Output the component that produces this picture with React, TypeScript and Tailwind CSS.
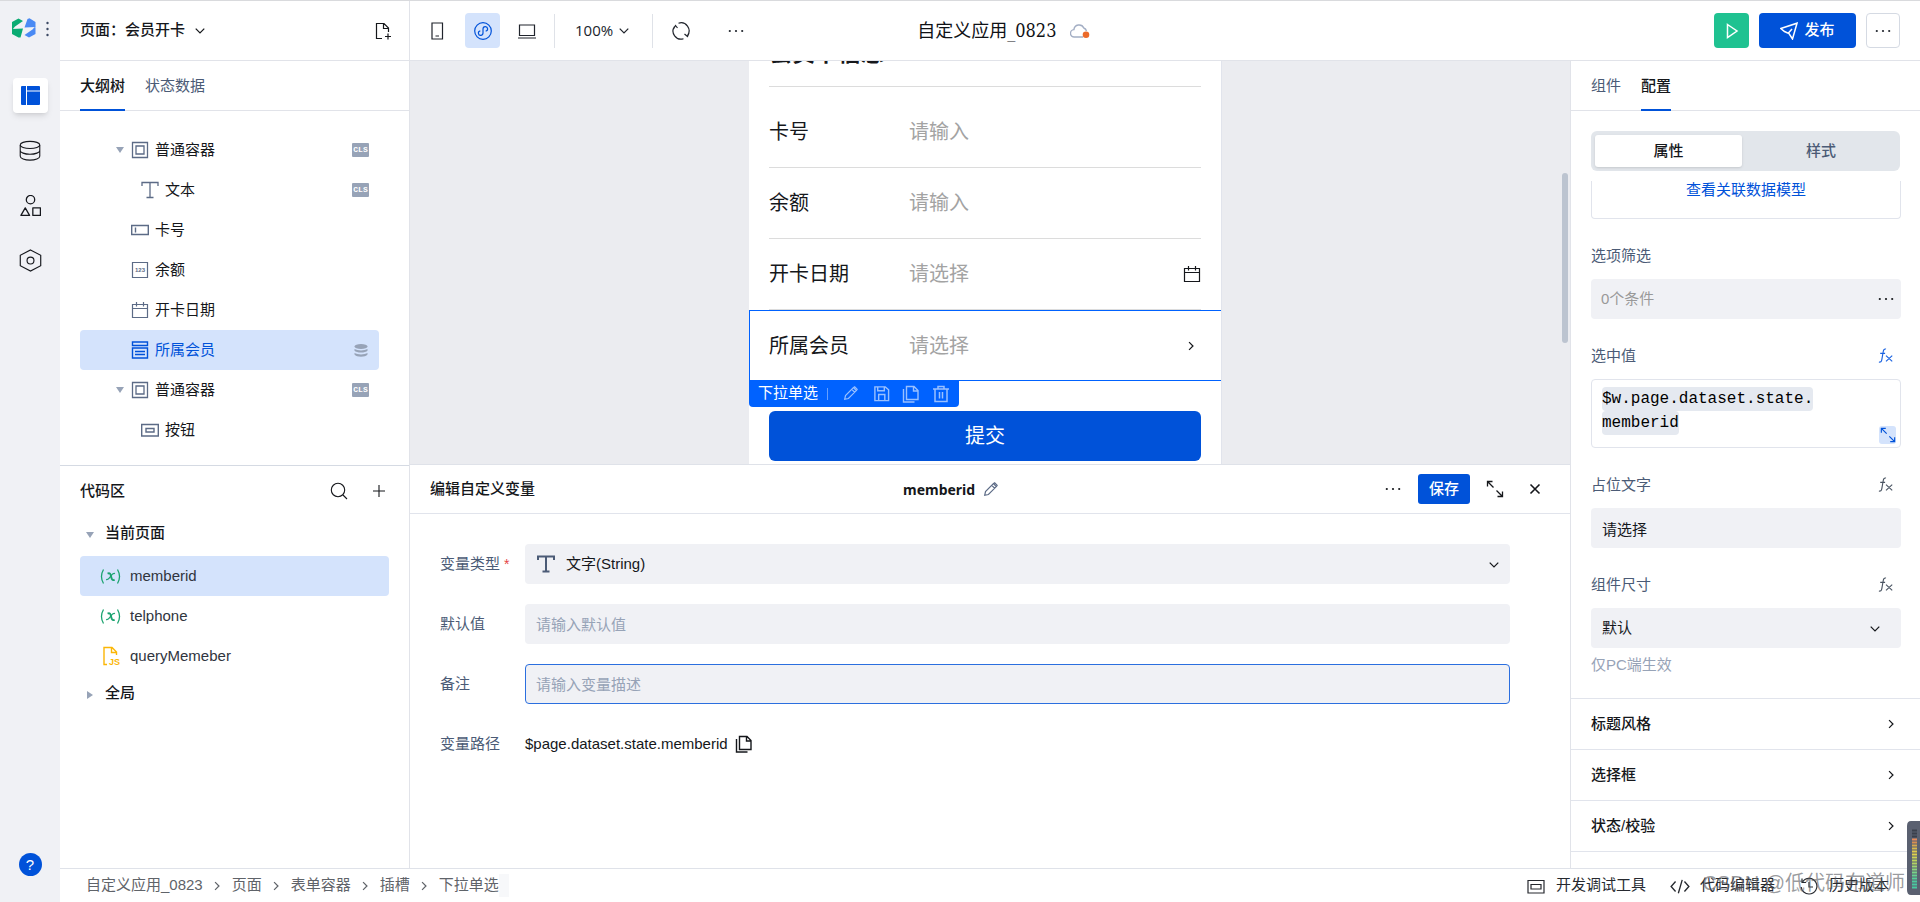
import React from 'react';

type IconProps = { children: React.ReactNode; size?: number; className?: string; w?: number };

function Icon({children, size = 18, className = '', w = 1.2}: IconProps) {
    return (
        <svg width={size} height={size} viewBox="0 0 18 18" fill="none" stroke="currentColor" strokeWidth={w}
             className={`shrink-0 ${className}`} aria-hidden="true">
            {children}
        </svg>
    );
}

const ChevronDown = ({className = ''}) => <Icon size={14} w={1.6} className={className}><path d="M3.500 6l5.500 5.500L14.500 6"/></Icon>;
const ChevronRight = ({className = ''}) => <Icon size={14} w={1.6} className={className}><path d="M6.500 4l5 5-5 5"/></Icon>;
const Dots = () => (
    <Icon><g fill="currentColor" stroke="none"><circle cx="2.800" cy="9" r="1.100"/><circle cx="9" cy="9" r="1.100"/><circle cx="15.200" cy="9" r="1.100"/></g></Icon>
);
const Expand = ({size = 18}) => (
    <Icon size={size} w={1.3}><path d="M7.500 7.500L1.500 1.500M1.500 6.500V1.500h5M10.500 10.500l6 6M16.500 11.500v5h-5"/></Icon>
);
const Pencil = ({className = ''}) => (
    <Icon size={15} className={className} w={1.4}><path d="M2 16l1-4.500L12.500 2l3.500 3.500L6.500 15zM10.500 4l3.500 3.500M12.500 2l1.500-1 3 3-1 1.500"/></Icon>
);
const Copy = ({className = ''}) => (
    <Icon className={className} w={1.4}><path d="M4.500 1.500h7.500l4 4v9H4.500zM11.500 1.500v4.500h4.500M1.500 4v13h11"/></Icon>
);
const Calendar = () => <Icon><path d="M1.500 3.500h15v13h-15zM1.500 7.500h15M5.500 1v4.500M12.500 1v4.500"/></Icon>;
const Triangle = ({open = true}) => (
    <svg width="8" height="8" viewBox="0 0 8 8" className="shrink-0 text-[#97a3b7]" fill="currentColor" aria-hidden="true">
        {open ? <path d="M0 1h8L4 7z"/> : <path d="M1 0l6 4-6 4z"/>}
    </svg>
);
const Fx = ({className = 'text-[#4b5563]'}) => (
    <Icon size={16} className={className} w={1.3}>
        <path d="M9 1.200C6.800.6 6.200 2.200 5.800 4.500L4.300 13c-.4 2.500-1.500 3.200-3.300 2.800M2.500 6h5.500M9 8.500l7 6.500M16 8.500L9 15"/>
    </Icon>
);
const Database = () => (
    <Icon size={22} w={0.9}><ellipse cx="9" cy="4" rx="8" ry="2.900"/><path d="M1 4v9.300c0 1.700 3.600 3.200 8 3.200s8-1.500 8-3.200V4M1 8.500c0 1.700 3.600 3.200 8 3.200s8-1.500 8-3.200"/></Icon>
);

const icons: Record<string, React.ReactNode> = {
    container: <Icon w={1.3}><path d="M1.500 1.500h15v15h-15zM5 5h8v8H5z"/></Icon>,
    text: <Icon w={1.3}><path d="M1 5V1.500h16V5M9 1.500v15M5.500 16.500h7"/></Icon>,
    input: <Icon w={1.4}><path d="M.700 4.500h16.600v9H.700zM4.500 6.500v5"/></Icon>,
    number: (
        <Icon w={1.2}>
            <path d="M1.500 1.500h15v15h-15z"/>
            <text x="9" y="11" textAnchor="middle" fontSize="6" fontWeight="bold" fill="currentColor" stroke="none">123</text>
        </Icon>
    ),
    date: <Calendar/>,
    select: <Icon w={1.4}><path d="M1.500 1h15v3.500h-15zM1.500 7h15v10h-15zM4 10.500h10M4 13.500h10"/></Icon>,
    button: <Icon w={1.4}><path d="M.700 3.500h16.600v11.500H.700zM5 7.500h8v3.500H5z"/></Icon>,
};

const tree = [
    {icon: 'container', label: '普通容器', open: true, tag: 'cls', deep: false},
    {icon: 'text', label: '文本', tag: 'cls', deep: true},
    {icon: 'input', label: '卡号', deep: false},
    {icon: 'number', label: '余额', deep: false},
    {icon: 'date', label: '开卡日期', deep: false},
    {icon: 'select', label: '所属会员', tag: 'data', active: true, deep: false},
    {icon: 'container', label: '普通容器', open: true, tag: 'cls', deep: false},
    {icon: 'button', label: '按钮', deep: true},
];

const fields = [
    {id: 'card', label: '卡号', placeholder: '请输入'},
    {id: 'balance', label: '余额', placeholder: '请输入'},
    {id: 'date', label: '开卡日期', placeholder: '请选择', icon: <Calendar/>},
];

const crumbs = ['自定义应用_0823', '页面', '表单容器', '插槽', '下拉单选'];

function Sidebar() {
    return (
        <nav className="w-[60px] shrink-0 flex flex-col items-center bg-[#f0f1f5] pb-[26px]">
            <div className="h-[77px] w-full flex items-start pt-[17px] pl-3 gap-2.5">
                <svg width="24" height="20" viewBox="0 0 24 20" aria-hidden="true">
                    <path d="M0 4L6.500.500l4.500 2.500L3 8.500 0 12zM0 11l11-.500-2.500 9-2 0L0 16z" fill="#0aab72"/>
                    <path d="M23.500 16L17 19.500 12.500 17l8-5.500 3-3.500zM23.500 9l-11 .500L15.500 1 17.500.200 23.500 4z" fill="#4a8af4"/>
                </svg>
                <svg width="4" height="18" viewBox="0 0 4 18" fill="#3c4964" className="mt-0.5" aria-hidden="true">
                    <circle cx="1.500" cy="3" r="1.200"/><circle cx="1.500" cy="9" r="1.200"/><circle cx="1.500" cy="15" r="1.200"/>
                </svg>
            </div>
            <div className="flex-1 flex flex-col gap-5 text-[#16181d]">
                <button aria-label="布局" className="size-[35px] flex items-center justify-center rounded bg-white shadow-md text-[#0052d9]">
                    <svg width="19" height="19" viewBox="0 0 19 19" fill="currentColor" aria-hidden="true">
                        <path d="M1 0h4v19H1a1 1 0 01-1-1V1a1 1 0 011-1zM6 0h12a1 1 0 011 1v3.500H6zM6 5.500h13V18a1 1 0 01-1 1H6z"/>
                    </svg>
                </button>
                <button aria-label="数据" className="size-[35px] flex items-center justify-center"><Database/></button>
                <button aria-label="组件库" className="size-[35px] flex items-center justify-center">
                    <Icon size={21} w={1.1}><circle cx="9" cy="4" r="3.600"/><path strokeLinejoin="round" d="M4.500 11l3.700 6.500H.800zM11 11h6.500v6.500H11z"/></Icon>
                </button>
                <button aria-label="设置" className="size-[35px] flex items-center justify-center">
                    <Icon size={23} w={0.9}><path d="M9 .700l8 4.200v8.200l-8 4.200-8-4.200V4.900z"/><circle cx="9" cy="9" r="2.700"/></Icon>
                </button>
            </div>
            <button className="size-[23px] rounded-full bg-[#0052d9] text-white text-[15px] leading-none">?</button>
        </nav>
    );
}

function Header() {
    return (
        <header className="h-[60px] shrink-0 flex bg-white border-b border-[#e1e3e9]">
            <div className="w-[350px] shrink-0 pl-5 pr-[17px] flex items-center justify-between border-r border-[#e1e3e9]">
                <button className="flex items-center gap-2 font-medium">页面：会员开卡<ChevronDown/></button>
                <button aria-label="新建页面">
                    <Icon w={1.2}><path d="M8 16.500H2.500V1.500H10l4.500 4.500v4M9.500 1.500v5h5M14 11.500v6M11 14.500h6"/></Icon>
                </button>
            </div>
            <div className="flex-1 min-w-0 flex items-center pl-[18px] pr-5 text-[#20242c]">
                <button aria-label="手机" className="size-[18px]"><Icon w={1.2}><path d="M4 1h10.500v16H4zM7.500 14h3.500"/></Icon></button>
                <button aria-label="小程序" className="size-[35px] ml-[19px] rounded flex items-center justify-center bg-[#d4e3fc] text-[#0052d9]">
                    <Icon w={1.2}>
                        <circle cx="9" cy="9" r="8.300"/>
                        <path d="M6.300 8.800a2.300 2.300 0 102.700 2.300V6.900a2.300 2.300 0 112.700 2.300"/>
                    </Icon>
                </button>
                <button aria-label="电脑" className="ml-[18px]"><Icon w={1.2}><path d="M1.500 3h15v10.500h-15zM0 16h18"/></Icon></button>
                <div className="w-px h-[34px] ml-[18px] bg-[#dfe2e8]"/>
                <button className="ml-[20px] flex items-center gap-1 font-['Open_Sans']">100%<ChevronDown/></button>
                <div className="w-px h-[34px] ml-[21px] bg-[#dfe2e8]"/>
                <button aria-label="刷新" className="ml-[19px]">
                    <Icon w={1.2}>
                        <path d="M6.500 1.200A8 8 0 0115.500 13.500M2.500 4.500A8 8 0 0011.500 16.700M1.500 7l2-3.500L5.500 6M12.500 12l3 2.500 1.500-3.500"/>
                    </Icon>
                </button>
                <button aria-label="更多" className="ml-[37px]"><Dots/></button>
                <h1 className="ml-[172px] text-[18px] text-[#101216] font-['DejaVu_Serif_Condensed','Noto_Sans_CJK_SC',sans-serif]">自定义应用_0823</h1>
                <svg width="20" height="16" viewBox="0 0 20 16" className="ml-[14px]" fill="none" aria-hidden="true">
                    <path d="M13 14H4.500a3.700 3.700 0 01-.6-7.400A5.200 5.200 0 0113.800 5a4.500 4.500 0 012.700 3" stroke="#a3aec4" strokeWidth="1.400"/>
                    <circle cx="16" cy="11.800" r="3.300" fill="#eb6a2a"/>
                </svg>
                <div className="ml-auto flex gap-2.5">
                    <button aria-label="运行" className="size-[35px] rounded flex items-center justify-center bg-[#1fc291] text-white">
                        <Icon w={1.5}><path d="M4.500 2.500l9.500 6.500-9.500 6.500z"/></Icon>
                    </button>
                    <button className="w-[97px] h-[35px] rounded flex items-center justify-center gap-1.5 bg-[#0052d9] text-white font-medium">
                        <Icon w={1.5}><path d="M.8 6.500L17 1.200 12.500 17 9 11.500 4.500 9.500zM8 11.500l4-4.500"/></Icon>发布
                    </button>
                    <button aria-label="更多操作" className="w-[34px] h-[35px] rounded border border-[#d5dae3] flex items-center justify-center"><Dots/></button>
                </div>
            </div>
        </header>
    );
}

function Outline() {
    return (
        <section className="flex-1 min-h-0 flex flex-col">
            <div className="h-[50px] shrink-0 flex gap-5 px-5 border-b border-[#e1e3e9]">
                <button className="-mb-px pt-[3px] border-b-2 border-[#0052d9] font-medium">大纲树</button>
                <button className="-mb-px pt-[3px] border-b-2 border-transparent text-[#4b5b76]">状态数据</button>
            </div>
            <ul className="pt-[19px] pl-5 pr-[30px]">
                {tree.map((node, i) => (
                    <li key={i} className={`h-10 flex items-center rounded pr-2.5 ${node.deep ? 'pl-[61px]' : 'pl-[36px]'} ${node.active ? 'bg-[#d4e3fc] text-[#0052d9]' : ''}`}>
                        {!node.deep && <span className="w-[15px] flex">{node.open && <Triangle/>}</span>}
                        <span className={node.active ? '' : 'text-[#5c6b86]'}>{icons[node.icon]}</span>
                        <span className="flex-1 pl-1.5">{node.label}</span>
                        {node.tag === 'cls' && (
                            <span className="w-[17px] h-[14px] rounded-[1px] bg-[#97a3b7] text-white text-[8px] leading-[14px] text-center font-bold font-['Liberation_Mono']">CLS</span>
                        )}
                        {node.tag === 'data' && (
                            <svg width="14" height="13" viewBox="0 0 14 13" className="mr-px" fill="#97a3b7" aria-hidden="true">
                                <ellipse cx="7" cy="2.500" rx="6.500" ry="2.500"/>
                                <path d="M.5 5c3 1.900 10 1.900 13 0v1.700c-2 2.400-11 2.400-13 0zM.5 9c3 1.900 10 1.900 13 0v1.500c-2 3-11 3-13 0z"/>
                            </svg>
                        )}
                    </li>
                ))}
            </ul>
        </section>
    );
}

function CodeArea() {
    const Var = () => (
        <Icon size={21} className="text-[#1aa36f]" w={1.1}>
            <path d="M3 3q-3.500 6 0 12M15 3q3.500 6 0 12"/>
            <path strokeWidth="1.600" d="M6.500 6.500c2-1 2.500.5 3 2.500s1 4 3 2.700"/>
            <path d="M12.800 6.500c-2-.8-3 1.500-4 2.800s-2 3-3.500 2.200"/>
        </Icon>
    );
    return (
        <section className="h-[403px] shrink-0 px-5 border-t border-[#d5dae3]">
            <div className="h-[50px] flex items-center">
                <h2 className="flex-1 font-medium">代码区</h2>
                <button aria-label="搜索" className="mr-[22px]"><Icon w={1.1}><circle cx="8" cy="8" r="6.700"/><path d="M13 13l4 4"/></Icon></button>
                <button aria-label="新增" className="mr-[1px]"><Icon w={1.1}><path d="M9 3v12M3 9h12"/></Icon></button>
            </div>
            <div className="h-[34px] mb-1.5 pl-1.5 flex items-center gap-[11px] font-medium"><span className="pt-1"><Triangle/></span>当前页面</div>
            <ul className="text-[#30353e]">
                <li className="h-10 pl-5 flex items-center gap-[9px] rounded bg-[#d4e3fc]"><Var/>memberid</li>
                <li className="h-10 pl-5 flex items-center gap-[9px]"><Var/>telphone</li>
                <li className="h-10 pl-5 flex items-center gap-[9px]">
                    <svg width="21" height="20" viewBox="0 0 21 20" fill="none" stroke="#fbb606" strokeWidth="1.400" aria-hidden="true">
                        <path d="M7 18.500H4V1.500h8l4.500 4.500v3M11.500 1.500v5h5"/>
                        <text x="9" y="18.500" fontSize="9" fontWeight="bold" fill="#fbb606" stroke="none">JS</text>
                    </svg>
                    queryMemeber
                </li>
            </ul>
            <div className="h-[34px] pl-1.5 flex items-center gap-[11px] font-medium"><span className="pt-1"><Triangle open={false}/></span>全局</div>
        </section>
    );
}

function Canvas() {
    return (
        <section className="relative flex-1 min-h-0 flex justify-center overflow-hidden bg-[#ebecf0] pr-[9px]">
            <div className="w-[473px] h-full flex flex-col justify-end bg-white border-r border-[#e1e4ec] text-[20px] text-[#15171b]">
                <h2 className="mx-5 shrink-0 pb-4 leading-[34px] text-[23px] font-bold border-b border-[#dcdcdc]">会员卡信息</h2>
                <div className="h-2.5 shrink-0"/>
                {fields.map(f => (
                    <div key={f.id} className="mx-5 h-[71px] shrink-0 flex items-center border-b border-[#dcdcdc]">
                        <label htmlFor={f.id} className="w-[140px]">{f.label}</label>
                        <input id={f.id} placeholder={f.placeholder} className="flex-1 min-w-0 outline-none placeholder:text-[#a3a3a3]"/>
                        {f.icon}
                    </div>
                ))}
                <div className="relative h-[71px] shrink-0 flex items-center pl-[19px] pr-[21px] border border-r-0 border-[#0062ff]">
                    <label htmlFor="member" className="w-[140px]">所属会员</label>
                    <input id="member" placeholder="请选择" className="flex-1 min-w-0 outline-none placeholder:text-[#a3a3a3]"/>
                    <ChevronRight className="mr-0.5"/>
                    <div className="absolute -left-px top-[69px] w-[210px] h-[27px] pl-[9px] flex items-center rounded-b bg-[#0062ff] text-white text-[15px]">
                        下拉单选
                        <span className="w-px h-3 ml-[9px] mr-[15px] bg-white/40"/>
                        <div className="flex items-center gap-3 text-white/60">
                            <button aria-label="编辑" className="w-[18px]"><Pencil/></button>
                            <button aria-label="存为模板"><Icon size={17} w={1.5}><path d="M2 2h11l3.500 3v11.500H2zM5 2v4h7V2M6 16.500V10h6.500v6.500"/></Icon></button>
                            <button aria-label="复制"><Copy/></button>
                            <button aria-label="删除"><Icon w={1.5}><path d="M1 4h16M6 4V1.500h6V4M3 4v12.500h12V4M7.500 7v6.500M10.500 7v6.500"/></Icon></button>
                        </div>
                    </div>
                </div>
                <button className="mx-5 mt-[30px] mb-[3px] h-[50px] shrink-0 rounded-md bg-[#0052d9] text-white">提交</button>
            </div>
            <div className="absolute right-[2px] top-[112px] w-1.5 h-[170px] rounded-full bg-[#bcc4d0]"/>
        </section>
    );
}

function VariableEditor() {
    return (
        <section className="h-[404px] shrink-0 bg-white border-t border-[#dfe2e9]">
            <div className="h-[49px] flex items-center pl-5 pr-[26px] border-b border-[#e1e4ec]">
                <h2 className="w-[473px] font-medium">编辑自定义变量</h2>
                <div className="flex-1 flex items-center gap-2 font-['Noto_Sans'] text-[14px] font-bold">
                    memberid<button aria-label="重命名"><Pencil className="text-[#5c6b86]"/></button>
                </div>
                <button aria-label="更多"><Dots/></button>
                <button className="w-[52px] h-[30px] ml-4 rounded-[3px] bg-[#0052d9] text-white font-medium">保存</button>
                <button aria-label="全屏" className="ml-4"><Expand/></button>
                <button aria-label="关闭" className="ml-[22px]"><Icon w={1.6}><path d="M4.500 4.500l9 9M13.500 4.500l-9 9"/></Icon></button>
            </div>
            <form className="pt-[30px] pl-[30px] pr-[60px] flex flex-col gap-5">
                <div className="h-10 flex items-center">
                    <label htmlFor="type" className="w-[85px] shrink-0 text-[#4b5b76]">变量类型<span className="ml-1 text-[#e54545] text-sm">*</span></label>
                    <div className="relative flex-1 h-full">
                        <select id="type" className="w-full h-full pl-[41px] rounded bg-[#f0f1f5] appearance-none">
                            <option>文字(String)</option>
                        </select>
                        <span className="absolute left-3 top-[11px] text-[#4b5b76]"><Icon w={2}><path d="M1 5V1.500h16V5M9 1.500v15M5.500 16.500h7"/></Icon></span>
                        <ChevronDown className="absolute right-[9px] top-[14px]"/>
                    </div>
                </div>
                <div className="h-10 flex items-center">
                    <label htmlFor="default" className="w-[85px] shrink-0 text-[#4b5b76]">默认值</label>
                    <input id="default" placeholder="请输入默认值" className="flex-1 h-full px-[11px] rounded bg-[#f0f1f5] placeholder:text-[#97a3b7]"/>
                </div>
                <div className="h-10 flex items-center">
                    <label htmlFor="remark" className="w-[85px] shrink-0 text-[#4b5b76]">备注</label>
                    <input id="remark" placeholder="请输入变量描述" className="flex-1 h-full px-2.5 rounded border border-[#2b6fdf] bg-[#f0f1f5] placeholder:text-[#97a3b7]"/>
                </div>
                <div className="h-10 flex items-center">
                    <span className="w-[85px] shrink-0 text-[#4b5b76]">变量路径</span>
                    <span>$page.dataset.state.memberid</span>
                    <button type="button" aria-label="复制路径" className="ml-[7px]"><Copy/></button>
                </div>
            </form>
        </section>
    );
}

function Inspector() {
    return (
        <aside className="w-[350px] shrink-0 flex flex-col overflow-hidden bg-white border-l border-[#e1e3e9]">
            <div className="h-[50px] shrink-0 flex gap-5 px-5 border-b border-[#e1e3e9]">
                <button className="-mb-px pt-[3px] border-b-2 border-transparent text-[#4b5b76]">组件</button>
                <button className="-mb-px pt-[3px] border-b-2 border-[#0052d9] font-medium">配置</button>
            </div>
            <div className="mx-5 mt-5 mb-2.5 h-10 shrink-0 p-1 flex rounded-md bg-[#e2e6eb]">
                <button className="w-[147px] rounded-[3px] bg-white shadow-sm font-medium">属性</button>
                <button className="flex-1 pl-1 text-[#4b5b76] font-medium">样式</button>
            </div>
            <div className="pl-5 pr-[19px] pb-[23px]">
                <div className="h-[38px] text-center leading-[18px] rounded-b border border-t-0 border-[#e1e4ec]">
                    <a href="#model" className="text-[#0052d9]">查看关联数据模型</a>
                </div>
                <div className="mt-[27px] mb-[13px] h-5 leading-5 text-[#4b5b76]">选项筛选</div>
                <button className="w-full h-10 pl-2.5 pr-1.5 flex items-center justify-between rounded bg-[#f0f1f5]">
                    <span className="text-[#999999]">0个条件</span><Dots/>
                </button>
                <div className="mt-[27px] mb-[13px] h-5 pr-[7px] flex items-center justify-between text-[#4b5b76]">选中值<Fx className="text-[#1a62e0]"/></div>
                <div className="relative h-[69px] rounded border border-[#e1e4ec]">
                    <div role="textbox" aria-label="选中值" contentEditable suppressContentEditableWarning
                         className="px-2.5 pt-[7px] font-['Liberation_Mono'] text-base leading-6 text-black">
                        <span className="rounded bg-[#e5e9f0] box-decoration-clone py-[3px]">$w.page.dataset.state.<br/>memberid</span>
                    </div>
                    <button aria-label="展开" className="absolute right-1 bottom-[3px] w-[17px] h-[18px] flex items-center justify-center rounded-[3px] bg-[#d4e3fc] text-[#0052d9]"><Expand size={16}/></button>
                </div>
                <div className="mt-[27px] mb-[13px] h-5 pr-[7px] flex items-center justify-between text-[#4b5b76]"><label htmlFor="ph">占位文字</label><Fx/></div>
                <input id="ph" defaultValue="请选择" className="w-full h-10 px-[11px] rounded bg-[#f0f1f5]"/>
                <div className="mt-[27px] mb-[13px] h-5 pr-[7px] flex items-center justify-between text-[#4b5b76]"><label htmlFor="size">组件尺寸</label><Fx/></div>
                <div className="relative h-10">
                    <select id="size" className="w-full h-full pl-[11px] rounded bg-[#f0f1f5] appearance-none"><option>默认</option></select>
                    <ChevronDown className="absolute right-[19px] top-[14px]"/>
                </div>
                <p className="mt-[7px] h-5 leading-5 text-[#97a3b7]">仅PC端生效</p>
            </div>
            {['标题风格', '选择框', '状态/校验'].map(t => (
                <button key={t} className="h-[51px] shrink-0 pl-5 pr-[22px] flex items-center justify-between border-t border-[#e1e4ec] font-medium">{t}<ChevronRight/></button>
            ))}
            <div className="border-t border-[#e1e4ec]"/>
        </aside>
    );
}

function Footer() {
    return (
        <footer className="h-[34px] shrink-0 flex items-center pl-[26px] pr-[31px] bg-white border-t border-[#dfe2e9]">
            <nav className="flex-1 flex items-center text-[#5f6369]">
                {crumbs.map((c, i) => (
                    <React.Fragment key={c}>
                        {i > 0 && <ChevronRight className="ml-[7px] mr-2"/>}
                        <a href="#page">{c}</a>
                    </React.Fragment>
                ))}
                <span className="w-2.5 h-[23px] bg-[#f7f8fa]"/>
            </nav>
            <div className="flex items-center text-[#26292f]">
                <button className="flex items-center gap-[11px]"><Icon w={1.2}><path d="M1 3.500h16v12.500H1zM4 7.500h10v4.500H4z"/></Icon>开发调试工具</button>
                <button className="flex items-center gap-2.5 ml-6"><Icon size={20}><path d="M5 5L1 9.500 5 14M13 5l4 4.500-4 4.500M11 3.500L7.500 15.500"/></Icon>代码编辑器</button>
                <button className="flex items-center gap-[11px] ml-[25px]"><Icon><path d="M2.500 5A7.800 7.800 0 119 17a7.800 7.800 0 01-7.800-7M2 1.500V5.500h4M9 5v5h4"/></Icon>历史版本</button>
            </div>
        </footer>
    );
}

function UsageMeter() {
    const colors = ['#3b404c', '#3b404c', '#3b404c', '#e88a5a', '#d98f52', '#d9a94e', '#d9b94e', '#e0cb4c', '#e0d34c', '#cdd455', '#bdd45b', '#b2d465', '#a0d672', '#8bd67d', '#78d488', '#66d291', '#57cf98', '#4dcb9d', '#49c8a0', '#49c8a0'];
    return (
        <svg width="13" height="74" viewBox="0 0 13 74" className="absolute right-0 bottom-[7px]" aria-hidden="true">
            <path d="M13 0H4Q0 0 0 5v64q0 5 4 5h9z" fill="#5a6070"/>
            {colors.map((c, i) => <path key={i} d={`M5 ${9.5 + i * 3}h5`} stroke={c} strokeWidth="2"/>)}
        </svg>
    );
}

export default function App() {
    return (
        <div className="relative h-screen flex overflow-hidden border-t border-[#d9dadd] bg-white text-[15px] text-[#15171b] font-['Liberation_Sans','Noto_Sans_CJK_SC',sans-serif]">
            <Sidebar/>
            <div className="flex-1 min-w-0 flex flex-col">
                <Header/>
                <main className="flex-1 min-h-0 flex">
                    <div className="w-[350px] shrink-0 flex flex-col border-r border-[#e1e3e9]">
                        <Outline/>
                        <CodeArea/>
                    </div>
                    <div className="flex-1 min-w-0 flex flex-col">
                        <Canvas/>
                        <VariableEditor/>
                    </div>
                    <Inspector/>
                </main>
                <Footer/>
            </div>
            <div className="absolute right-[15px] bottom-[4px] text-[20px] leading-[30px] text-[#55585e]/60 pointer-events-none">CSDN @低代码布道师</div>
            <UsageMeter/>
        </div>
    );
}
